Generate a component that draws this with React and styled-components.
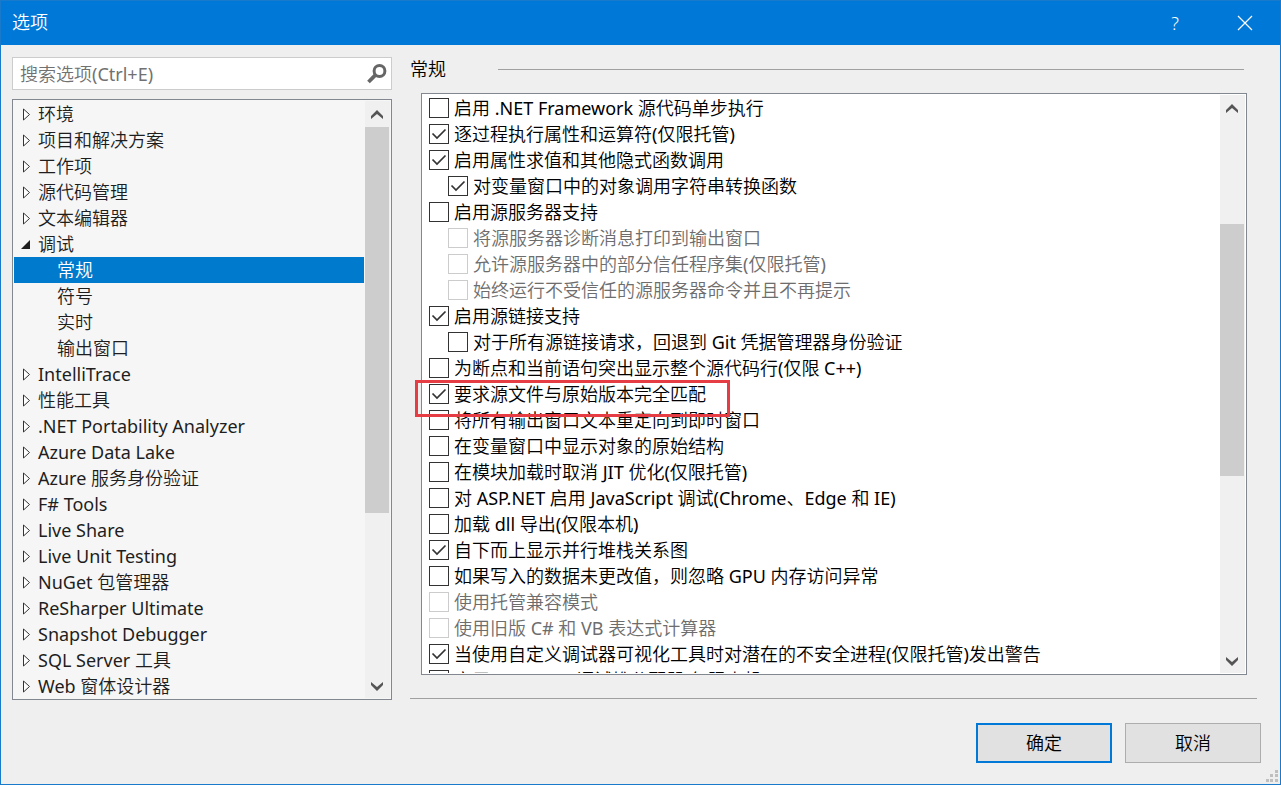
import React, { useState } from "react";
import styled, { createGlobalStyle } from "styled-components";

const TREE = [
  { name: "环境" },
  { name: "项目和解决方案" },
  { name: "工作项" },
  { name: "源代码管理" },
  { name: "文本编辑器" },
  { name: "调试", children: ["常规", "符号", "实时", "输出窗口"] },
  { name: "IntelliTrace" },
  { name: "性能工具" },
  { name: ".NET Portability Analyzer" },
  { name: "Azure Data Lake" },
  { name: "Azure 服务身份验证" },
  { name: "F# Tools" },
  { name: "Live Share" },
  { name: "Live Unit Testing" },
  { name: "NuGet 包管理器" },
  { name: "ReSharper Ultimate" },
  { name: "Snapshot Debugger" },
  { name: "SQL Server 工具" },
  { name: "Web 窗体设计器" },
];

const OPTIONS = [
  { text: "启用 .NET Framework 源代码单步执行" },
  { text: "逐过程执行属性和运算符(仅限托管)", checked: true },
  { text: "启用属性求值和其他隐式函数调用", checked: true },
  { text: "对变量窗口中的对象调用字符串转换函数", checked: true, sub: true },
  { text: "启用源服务器支持" },
  { text: "将源服务器诊断消息打印到输出窗口", sub: true, disabled: true },
  { text: "允许源服务器中的部分信任程序集(仅限托管)", sub: true, disabled: true },
  { text: "始终运行不受信任的源服务器命令并且不再提示", sub: true, disabled: true },
  { text: "启用源链接支持", checked: true },
  { text: "对于所有源链接请求，回退到 Git 凭据管理器身份验证", sub: true },
  { text: "为断点和当前语句突出显示整个源代码行(仅限 C++)" },
  { text: "要求源文件与原始版本完全匹配", checked: true },
  { text: "将所有输出窗口文本重定向到即时窗口" },
  { text: "在变量窗口中显示对象的原始结构" },
  { text: "在模块加载时取消 JIT 优化(仅限托管)" },
  { text: "对 ASP.NET 启用 JavaScript 调试(Chrome、Edge 和 IE)" },
  { text: "加载 dll 导出(仅限本机)" },
  { text: "自下而上显示并行堆栈关系图", checked: true },
  { text: "如果写入的数据未更改值，则忽略 GPU 内存访问异常" },
  { text: "使用托管兼容模式", disabled: true },
  { text: "使用旧版 C# 和 VB 表达式计算器", disabled: true },
  { text: "当使用自定义调试器可视化工具时对潜在的不安全进程(仅限托管)发出警告", checked: true },
  { text: "启用 Windows 调试堆分配器(仅限本机)" },
];

const Chevron = ({ down }) => (
  <svg width="12" height="10" viewBox="0 0 12 10">
    <path
      d={
        down
          ? "M0 1 L6 6 L12 1 V4 L6 10 L0 4 Z"
          : "M0 9 L6 4 L12 9 V6 L6 0 L0 6 Z"
      }
      fill="#555"
    />
  </svg>
);

const ScrollBar = ({ before, size, after }) => (
  <Scroll>
    <ScrollButton type="button" aria-label="向上滚动">
      <Chevron />
    </ScrollButton>
    <Space $grow={before} />
    <Thumb $grow={size} />
    <Space $grow={after} />
    <ScrollButton type="button" aria-label="向下滚动">
      <Chevron down />
    </ScrollButton>
  </Scroll>
);

const Arrow = ({ open }) => (
  <svg width="24" height="26" viewBox="0 0 24 26">
    {open ? (
      <path d="M16 9 V18 H7 Z" fill="#1e1e1e" />
    ) : (
      <path d="M9.5 8 V19 L15.5 13.5 Z" fill="#fff" stroke="#333" />
    )}
  </svg>
);

const App = () => {
  const [search, setSearch] = useState("");
  const [selected, setSelected] = useState("常规");
  const [options, setOptions] = useState(OPTIONS);

  const toggle = (index) => {
    setOptions(
      options.map((o, i) => (i === index ? { ...o, checked: !o.checked } : o))
    );
  };

  return (
    <Dialog>
      <GlobalStyle />
      <TitleBar>
        <Title>选项</Title>
        <TitleButton type="button">?</TitleButton>
        <TitleButton type="button" aria-label="关闭">
          <svg width="16" height="16" viewBox="0 0 16 16">
            <path d="M1 1 L15 15 M15 1 L1 15" stroke="#fff" strokeWidth="1.2" />
          </svg>
        </TitleButton>
      </TitleBar>

      <Body>
        <Side>
          <SearchBox>
            <input
              type="text"
              aria-label="搜索选项"
              placeholder="搜索选项(Ctrl+E)"
              value={search}
              onChange={(e) => setSearch(e.target.value)}
            />
            <svg width="20" height="20" viewBox="0 0 20 20" fill="none">
              <circle cx="12.5" cy="7" r="5.4" stroke="#666" strokeWidth="3" />
              <path d="M8.8 10.7 L1.5 18" stroke="#666" strokeWidth="3.8" />
            </svg>
          </SearchBox>
          <TreePanel>
            <TreeList>
              {TREE.map((node) => (
                <li key={node.name}>
                  <TreeItem type="button">
                    <Arrow open={!!node.children} />
                    {node.name}
                  </TreeItem>
                  {(node.children || []).map((child) => (
                    <TreeItem
                      key={child}
                      type="button"
                      $child
                      $selected={child === selected}
                      onClick={() => setSelected(child)}
                    >
                      {child}
                    </TreeItem>
                  ))}
                </li>
              ))}
            </TreeList>
            <ScrollBar before={0} size={387} after={159} />
          </TreePanel>
        </Side>

        <Main>
          <Heading>
            <h2>常规</h2>
            <hr />
          </Heading>
          <OptionPanel>
            <OptionList>
              {options.map((o, i) => (
                <Option key={o.text} $sub={o.sub} $disabled={o.disabled}>
                  <Check
                    type="checkbox"
                    checked={!!o.checked}
                    disabled={o.disabled}
                    onChange={() => toggle(i)}
                  />
                  <span>{o.text}</span>
                </Option>
              ))}
            </OptionList>
            <ScrollBar before={103} size={252} after={171} />
            <Highlight />
          </OptionPanel>
          <Divider />
        </Main>
      </Body>

      <Footer>
        <Button type="button" $primary>
          确定
        </Button>
        <Button type="button">取消</Button>
      </Footer>
      <Grip width="12" height="12" viewBox="0 0 12 12" fill="#bfbfbf">
        <path d="M9 0h3v3h-3z M4 4h3v3h-3z M9 4h3v3h-3z M0 9h3v3h-3z M4 9h3v3h-3z M9 9h3v3h-3z" />
      </Grip>
    </Dialog>
  );
};

export default App;

const GlobalStyle = createGlobalStyle`
  * {
    box-sizing: border-box;
  }
  body {
    margin: 0;
  }
  body, button, input {
    font-family: "Noto Sans", "Noto Sans CJK SC DemiLight", "Noto Sans CJK SC", sans-serif;
    font-size: 18px;
    font-weight: 400;
    line-height: 26px;
  }
`;

const Dialog = styled.div`
  position: relative;
  display: flex;
  flex-direction: column;
  height: 100vh;
  border: 1px solid #1979ca;
  background: #efefef;
  color: #000;
`;

const TitleBar = styled.header`
  display: flex;
  align-items: stretch;
  height: 44px;
  padding-left: 11px;
  background: #0078d7;
  color: #fff;
`;

const Title = styled.h1`
  flex: 1;
  margin: 0;
  font-size: 18px;
  font-weight: 400;
  line-height: 42px;
`;

const TitleButton = styled.button`
  display: flex;
  align-items: center;
  justify-content: center;
  width: 70px;
  padding: 0;
  border: none;
  background: none;
  color: #fff;
  font-weight: 300;
`;

const Body = styled.div`
  flex: 1;
  display: grid;
  grid-template-columns: 380px minmax(0, 1fr);
  grid-template-rows: minmax(0, 1fr);
  gap: 18px;
  min-height: 0;
  padding: 12px 23px 0 11px;
`;

const Side = styled.div`
  display: flex;
  flex-direction: column;
  gap: 9px;
  min-height: 0;
`;

const SearchBox = styled.label`
  display: flex;
  align-items: center;
  height: 33px;
  padding: 0 4px 0 7px;
  border: 1px solid #ccc;
  background: #fff;

  & > input {
    flex: 1;
    min-width: 0;
    padding: 0;
    border: none;
    outline: none;
    background: none;
  }
  & > input::placeholder {
    color: #717171;
    opacity: 1;
  }
`;

const TreePanel = styled.div`
  flex: 1;
  display: flex;
  min-height: 0;
  padding: 1px;
  border: 1px solid #828790;
  background: #f6f6f6;
`;

const TreeList = styled.ul`
  flex: 1;
  margin: 0 1px 0 0;
  padding: 0;
  overflow: hidden;
  list-style: none;
`;

const TreeItem = styled.button`
  display: flex;
  align-items: center;
  width: 100%;
  height: 26px;
  padding: 0 0 0 ${(p) => (p.$child ? "43px" : "0")};
  border: none;
  background: ${(p) => (p.$selected ? "#007acc" : "none")};
  color: ${(p) => (p.$selected ? "#fff" : "#1e1e1e")};
  white-space: nowrap;
`;

const Scroll = styled.div`
  display: flex;
  flex-direction: column;
  width: 25px;
  padding-right: 1px;
  background: #f0f0f0;
`;

const ScrollButton = styled.button`
  display: flex;
  align-items: center;
  justify-content: center;
  height: 26px;
  padding: 2px 0 0;
  border: none;
  background: none;
`;

const Space = styled.div`
  flex: ${(p) => p.$grow} 0 0;
`;

const Thumb = styled.div`
  flex: ${(p) => p.$grow} 0 0;
  background: #cdcdcd;
`;

const Main = styled.main`
  display: flex;
  flex-direction: column;
  min-width: 0;
  min-height: 0;
  padding-bottom: 1px;
`;

const Heading = styled.div`
  display: flex;
  align-items: center;
  gap: 52px;
  height: 24px;
  margin: 0 13px 12px 0;

  & > h2 {
    margin: 0;
    font-size: 18px;
    font-weight: 400;
  }
  & > hr {
    flex: 1;
    margin: 0;
    border: none;
    border-top: 1px solid #a0a0a0;
  }
`;

const OptionPanel = styled.div`
  position: relative;
  flex: 1;
  display: flex;
  min-height: 0;
  margin: 0 10px 23px 11px;
  padding: 1px;
  border: 1px solid #828790;
  background: #fff;
`;

const OptionList = styled.div`
  flex: 1;
  padding-left: 6px;
  overflow: hidden;
`;

const Option = styled.label`
  display: flex;
  align-items: center;
  gap: 5px;
  height: 26px;
  padding-left: ${(p) => (p.$sub ? "19px" : "0")};
  color: ${(p) => (p.$disabled ? "#6d6d6d" : "#000")};
  white-space: nowrap;
`;

const CHECK_MARK = `url("data:image/svg+xml,%3Csvg xmlns='http://www.w3.org/2000/svg' viewBox='0 0 18 18'%3E%3Cpath d='M2.5 8.5 L7 13 L15.5 4.5' fill='none' stroke='%23333' stroke-width='1.7'/%3E%3C/svg%3E")`;

const Check = styled.input`
  appearance: none;
  flex: none;
  width: 20px;
  height: 20px;
  margin: 0;
  border: 1px solid #333;
  background: #fff;

  &:checked {
    background-image: ${CHECK_MARK};
  }
  &:disabled {
    border-color: #ccc;
  }
`;

// red frame drawn over the source file option
const Highlight = styled.div`
  position: absolute;
  top: 286px;
  left: -7px;
  width: 315px;
  height: 37px;
  border: 3px solid #e63c44;
  pointer-events: none;
`;

const Divider = styled.hr`
  width: 100%;
  margin: 0;
  border: none;
  border-top: 1px solid #a0a0a0;
`;

const Footer = styled.footer`
  display: flex;
  justify-content: flex-end;
  gap: 13px;
  padding: 23px 19px 21px;
`;

const Button = styled.button`
  width: 136px;
  height: 40px;
  padding: 0;
  border: ${(p) => (p.$primary ? "2px solid #0078d7" : "1px solid #adadad")};
  background: #e1e1e1;
  color: #000;
`;

const Grip = styled.svg`
  position: absolute;
  right: 2px;
  bottom: 2px;
`;
